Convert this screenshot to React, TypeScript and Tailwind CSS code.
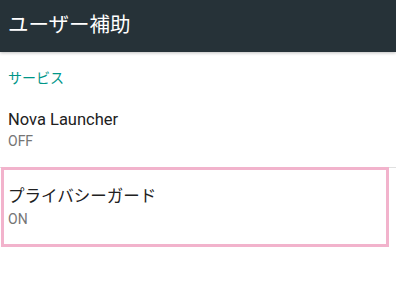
export default function App() {
  return (
    <div className="h-[289px] w-[396px] overflow-hidden bg-white font-['Roboto','Noto_Sans_CJK_JP',sans-serif]">
      <div className="relative z-10 flex h-[52px] items-center bg-[#263238] px-2 shadow-[0_1px_3px_rgba(0,0,0,0.25)]">
        <h1 className="pb-[2px] text-[20.5px] text-white">ユーザー補助</h1>
      </div>

      <div className="px-2 pt-[17px] text-[14px] leading-[18px] text-[#009688]">サービス</div>

      <div className="px-2 pt-[23px] pb-[18px]">
        <div className="text-[16.5px] leading-[20px] text-[#212121]">Nova Launcher</div>
        <div className="mt-[3px] text-[14px] leading-[16px] text-[#757575]">OFF</div>
      </div>

      <div className="h-px bg-[#e0e0e0]" />

      <div className="ml-px mr-[7px] -mt-[1px] h-[80px] border-[3px] border-[#f2b3cc] px-[4px] pt-[17px]">
        <div className="text-[16.5px] leading-[20px] text-[#212121]">プライバシーガード</div>
        <div className="mt-[4px] text-[14px] leading-[16px] text-[#757575]">ON</div>
      </div>
    </div>
  );
}
